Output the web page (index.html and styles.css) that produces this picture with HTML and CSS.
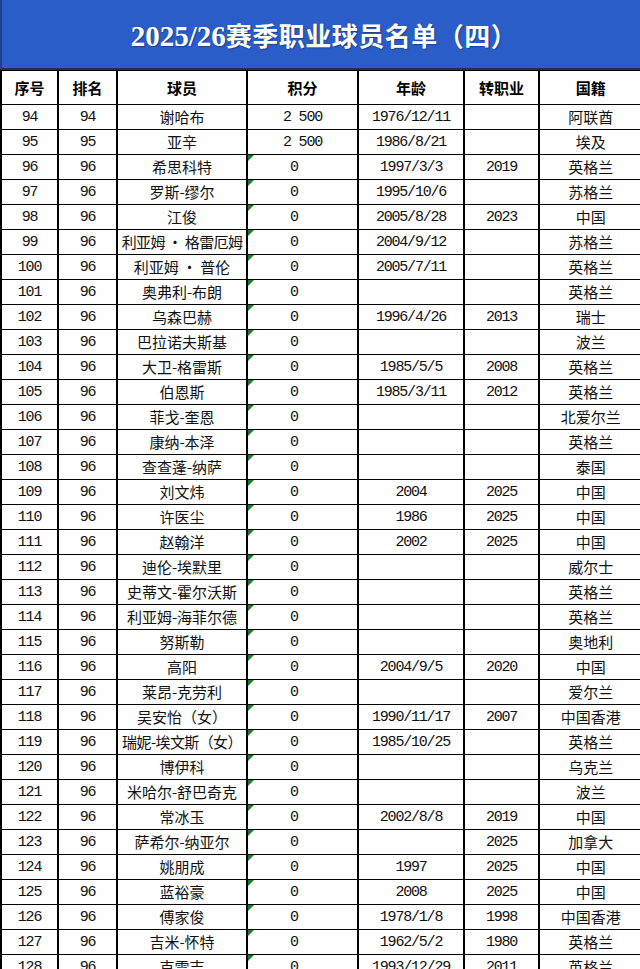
FILE: index.html
```html
<!DOCTYPE html>
<html lang="zh">
<head>
<meta charset="utf-8">
<link rel="stylesheet" href="styles.css">
</head>
<body>
<div class="title">
  <h1><span class="lat">2025/26</span>赛季职业球员名单（四）</h1>
</div>
<table class="list">
  <colgroup>
    <col class="c1"><col class="c2"><col class="c3"><col class="c4"><col class="c5"><col class="c6"><col class="c7">
  </colgroup>
  <thead>
    <tr><th>序号</th><th>排名</th><th>球员</th><th>积分</th><th>年龄</th><th>转职业</th><th>国籍</th></tr>
  </thead>
  <tbody>
    <tr><td class="n">94</td><td class="n">94</td><td>谢哈布</td><td class="n">2 500</td><td class="n">1976/12/11</td><td class="n"></td><td>阿联酋</td></tr>
    <tr><td class="n">95</td><td class="n">95</td><td>亚辛</td><td class="n">2 500</td><td class="n">1986/8/21</td><td class="n"></td><td>埃及</td></tr>
    <tr><td class="n">96</td><td class="n">96</td><td>希思科特</td><td class="n z">0</td><td class="n">1997/3/3</td><td class="n">2019</td><td>英格兰</td></tr>
    <tr><td class="n">97</td><td class="n">96</td><td>罗斯-缪尔</td><td class="n z">0</td><td class="n">1995/10/6</td><td class="n"></td><td>苏格兰</td></tr>
    <tr><td class="n">98</td><td class="n">96</td><td>江俊</td><td class="n z">0</td><td class="n">2005/8/28</td><td class="n">2023</td><td>中国</td></tr>
    <tr><td class="n">99</td><td class="n">96</td><td class="tight">利亚姆 · 格雷厄姆</td><td class="n z">0</td><td class="n">2004/9/12</td><td class="n"></td><td>苏格兰</td></tr>
    <tr><td class="n">100</td><td class="n">96</td><td>利亚姆 · 普伦</td><td class="n z">0</td><td class="n">2005/7/11</td><td class="n"></td><td>英格兰</td></tr>
    <tr><td class="n">101</td><td class="n">96</td><td>奥弗利-布朗</td><td class="n z">0</td><td class="n"></td><td class="n"></td><td>英格兰</td></tr>
    <tr><td class="n">102</td><td class="n">96</td><td>乌森巴赫</td><td class="n z">0</td><td class="n">1996/4/26</td><td class="n">2013</td><td>瑞士</td></tr>
    <tr><td class="n">103</td><td class="n">96</td><td>巴拉诺夫斯基</td><td class="n z">0</td><td class="n"></td><td class="n"></td><td>波兰</td></tr>
    <tr><td class="n">104</td><td class="n">96</td><td>大卫-格雷斯</td><td class="n z">0</td><td class="n">1985/5/5</td><td class="n">2008</td><td>英格兰</td></tr>
    <tr><td class="n">105</td><td class="n">96</td><td>伯恩斯</td><td class="n z">0</td><td class="n">1985/3/11</td><td class="n">2012</td><td>英格兰</td></tr>
    <tr><td class="n">106</td><td class="n">96</td><td>菲戈-奎恩</td><td class="n z">0</td><td class="n"></td><td class="n"></td><td>北爱尔兰</td></tr>
    <tr><td class="n">107</td><td class="n">96</td><td>康纳-本泽</td><td class="n z">0</td><td class="n"></td><td class="n"></td><td>英格兰</td></tr>
    <tr><td class="n">108</td><td class="n">96</td><td>查查蓬-纳萨</td><td class="n z">0</td><td class="n"></td><td class="n"></td><td>泰国</td></tr>
    <tr><td class="n">109</td><td class="n">96</td><td>刘文炜</td><td class="n z">0</td><td class="n">2004</td><td class="n">2025</td><td>中国</td></tr>
    <tr><td class="n">110</td><td class="n">96</td><td>许医尘</td><td class="n z">0</td><td class="n">1986</td><td class="n">2025</td><td>中国</td></tr>
    <tr><td class="n">111</td><td class="n">96</td><td>赵翰洋</td><td class="n z">0</td><td class="n">2002</td><td class="n">2025</td><td>中国</td></tr>
    <tr><td class="n">112</td><td class="n">96</td><td>迪伦-埃默里</td><td class="n z">0</td><td class="n"></td><td class="n"></td><td>威尔士</td></tr>
    <tr><td class="n">113</td><td class="n">96</td><td>史蒂文-霍尔沃斯</td><td class="n z">0</td><td class="n"></td><td class="n"></td><td>英格兰</td></tr>
    <tr><td class="n">114</td><td class="n">96</td><td>利亚姆-海菲尔德</td><td class="n z">0</td><td class="n"></td><td class="n"></td><td>英格兰</td></tr>
    <tr><td class="n">115</td><td class="n">96</td><td>努斯勒</td><td class="n z">0</td><td class="n"></td><td class="n"></td><td>奥地利</td></tr>
    <tr><td class="n">116</td><td class="n">96</td><td>高阳</td><td class="n z">0</td><td class="n">2004/9/5</td><td class="n">2020</td><td>中国</td></tr>
    <tr><td class="n">117</td><td class="n">96</td><td>莱昂-克劳利</td><td class="n z">0</td><td class="n"></td><td class="n"></td><td>爱尔兰</td></tr>
    <tr><td class="n">118</td><td class="n">96</td><td>吴安怡（女）</td><td class="n z">0</td><td class="n">1990/11/17</td><td class="n">2007</td><td>中国香港</td></tr>
    <tr><td class="n">119</td><td class="n">96</td><td class="tight">瑞妮-埃文斯（女）</td><td class="n z">0</td><td class="n">1985/10/25</td><td class="n"></td><td>英格兰</td></tr>
    <tr><td class="n">120</td><td class="n">96</td><td>博伊科</td><td class="n z">0</td><td class="n"></td><td class="n"></td><td>乌克兰</td></tr>
    <tr><td class="n">121</td><td class="n">96</td><td>米哈尔-舒巴奇克</td><td class="n z">0</td><td class="n"></td><td class="n"></td><td>波兰</td></tr>
    <tr><td class="n">122</td><td class="n">96</td><td>常冰玉</td><td class="n z">0</td><td class="n">2002/8/8</td><td class="n">2019</td><td>中国</td></tr>
    <tr><td class="n">123</td><td class="n">96</td><td>萨希尔-纳亚尔</td><td class="n z">0</td><td class="n"></td><td class="n">2025</td><td>加拿大</td></tr>
    <tr><td class="n">124</td><td class="n">96</td><td>姚朋成</td><td class="n z">0</td><td class="n">1997</td><td class="n">2025</td><td>中国</td></tr>
    <tr><td class="n">125</td><td class="n">96</td><td>蓝裕豪</td><td class="n z">0</td><td class="n">2008</td><td class="n">2025</td><td>中国</td></tr>
    <tr><td class="n">126</td><td class="n">96</td><td>傅家俊</td><td class="n z">0</td><td class="n">1978/1/8</td><td class="n">1998</td><td>中国香港</td></tr>
    <tr><td class="n">127</td><td class="n">96</td><td>吉米-怀特</td><td class="n z">0</td><td class="n">1962/5/2</td><td class="n">1980</td><td>英格兰</td></tr>
    <tr><td class="n">128</td><td class="n">96</td><td>克雷吉</td><td class="n z">0</td><td class="n">1993/12/29</td><td class="n">2011</td><td>英格兰</td></tr>
  </tbody>
</table>
</body>
</html>
```
FILE: styles.css
```css
html, body {
  margin: 0;
  padding: 0;
  background: #fff;
}
body {
  width: 640px;
  overflow: hidden;
  font-family: "Noto Sans CJK SC", "Noto Sans", sans-serif;
  color: #111;
}
.title {
  height: 68px;
  background: #2a5dc7;
  border-left: 2px solid #1d3f8c;
  border-bottom: 2px solid #1b2d6b;
  display: flex;
  align-items: center;
  justify-content: center;
}
.title h1 {
  margin: 0 0 0 6px;
  font-size: 26px;
  font-weight: 700;
  color: #fff;
  letter-spacing: 0.5px;
  text-shadow: 1px 1px 1px rgba(10, 30, 80, 0.45);
  font-family: "Noto Sans CJK SC", sans-serif;
}
.title .lat {
  font-family: "Liberation Serif", serif;
  font-size: 29px;
  letter-spacing: 0;
}
.list {
  border-collapse: collapse;
  table-layout: fixed;
  width: 641px;
}
.c1 { width: 57px; }
.c2 { width: 59px; }
.c3 { width: 130px; }
.c4 { width: 111px; }
.c5 { width: 106px; }
.c6 { width: 75px; }
.c7 { width: 103px; }
.list th, .list td {
  border: 1px solid #000;
  border-left-width: 2px;
  padding: 0;
  text-align: center;
  white-space: nowrap;
  overflow: visible;
}
.list th {
  height: 33px;
  font-size: 15px;
  font-weight: 700;
  color: #000;
}
.list td {
  height: 24px;
  font-size: 15px;
  line-height: 18px;
  position: relative;
}
.list td.n {
  font-family: "Liberation Mono", monospace;
  font-size: 15px;
  letter-spacing: -1.2px;
  padding-top: 2px;
  height: 22px;
}
.list td.z {
  padding-right: 17px;
}
.list td.z::before {
  content: "";
  position: absolute;
  left: 0;
  top: 0;
  border-top: 6px solid #1f7d2a;
  border-right: 6px solid transparent;
}
.list td.tight {
  letter-spacing: -0.6px;
}
```
